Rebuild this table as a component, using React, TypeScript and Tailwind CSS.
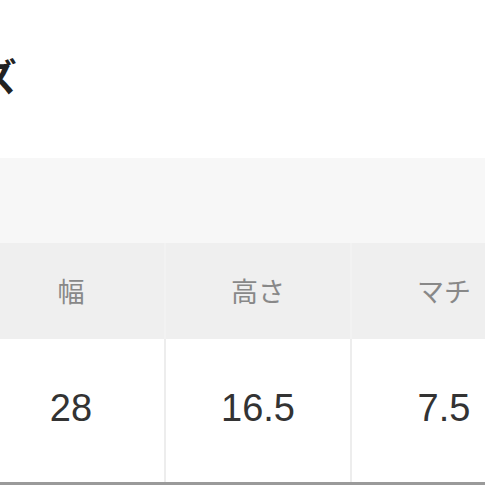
import React from "react";

const cols = [
  { label: "幅", value: "28" },
  { label: "高さ", value: "16.5" },
  { label: "マチ", value: "7.5" },
];

export default function App() {
  return (
    <div className="w-[485px] h-[485px] overflow-hidden bg-white font-['Noto_Sans_CJK_JP','Noto_Sans',sans-serif]">
      <div className="h-[158px] pt-[46px]">
        <h2 className="ml-[-96px] text-[38px] leading-[58px] font-bold text-[#222] whitespace-nowrap">サイズ</h2>
      </div>
      <div className="h-[85px] bg-[#f7f7f7]" />
      <div className="ml-[-22px] w-[558px] grid grid-cols-3 h-[96px] bg-[#efefef]">
        {cols.map((c, i) => (
          <div
            key={c.label}
            className={`flex items-center justify-center text-[27px] text-[#888] ${i > 0 ? "border-l-2 border-[#f2f2f2]" : ""}`}
          >
            {c.label}
          </div>
        ))}
      </div>
      <div className="ml-[-22px] w-[558px] grid grid-cols-3 h-[146px] bg-white border-b-[3px] border-[#9a9a9a]">
        {cols.map((c, i) => (
          <div
            key={c.value}
            className={`flex items-center justify-center pb-[4px] text-[38px] text-[#333] font-['Liberation_Sans',sans-serif] ${i > 0 ? "border-l-2 border-[#ededed]" : ""}`}
          >
            {c.value}
          </div>
        ))}
      </div>
    </div>
  );
}
